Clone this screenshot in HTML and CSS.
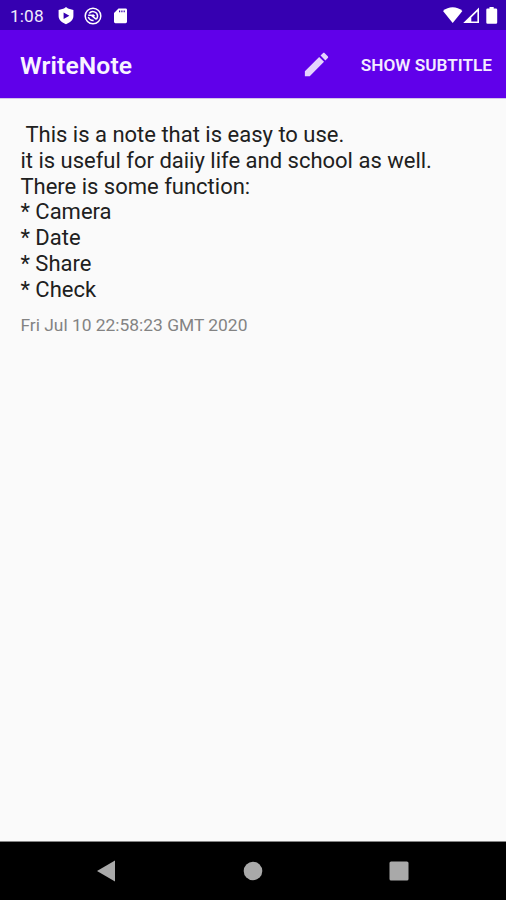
FILE: index.html
```html
<!DOCTYPE html>
<html lang="en">
<head>
<meta charset="utf-8">
<title>WriteNote</title>
<link rel="stylesheet" href="styles.css">
</head>
<body>
<div class="screen">
  <div class="status">
    <span class="clock">1:08</span>
    <svg class="shield" width="16" height="18" viewBox="0 0 16 18"><path fill="#fff" fill-rule="evenodd" d="M8 0 10 1.6 15.4 3V9C15.4 13 12 15.5 8 17.2 4 15.5.6 13 .6 9V3L6 1.6ZM5.6 5.5V12L11.4 8.7Z"/></svg>
    <svg class="sync" width="18" height="18" viewBox="0 0 18 18" fill="none" stroke="#fff"><circle cx="9" cy="9" r="7.8" stroke-width="1.5"/><path stroke-width="1.5" d="M5.2 6.4A4.7 4.7 0 0 1 13.6 9.2Q13.4 11 12.3 12.2M4.3 9.9C5 12.3 6.8 13.6 9.6 13.5M4.2 8.2H7.2L12 12.2M8.4 7.6 10.6 9.2"/></svg>
    <svg class="card" width="13" height="16" viewBox="0 0 13 16"><path fill="#fff" fill-rule="evenodd" d="M4.5.4H11.6Q13 .4 13 1.8V13.8Q13 15.2 11.6 15.2H1.4Q0 15.2 0 13.8V5ZM5 2.4V4.2H6.2V2.4ZM7.3 2.4V4.2H8.5V2.4ZM9.6 2.4V4.2H10.8V2.4Z"/></svg>
    <svg class="wifi" width="20" height="17" viewBox="0 0 20 17"><path fill="#fff" d="M0 4Q4.3.3 9.7.3T19.4 4L9.7 16Z"/></svg>
    <svg class="signal" width="17" height="17" viewBox="0 0 17 17"><path fill="#fff" fill-rule="evenodd" d="M16 .5V16H.2ZM14.4 4.5 8.3 10.6V14.4H14.4Z"/></svg>
    <svg class="battery" width="12" height="18" viewBox="0 0 12 18"><path fill="#fff" d="M3.5 0H7.7V1.5H9.9Q11.2 1.5 11.2 2.8V15.4Q11.2 16.7 9.9 16.7H1.6Q.3 16.7 .3 15.4V2.8Q.3 1.5 1.6 1.5H3.5Z"/></svg>
  </div>
  <header class="bar">
    <h1 class="title">WriteNote</h1>
    <svg class="pencil" width="31" height="31" viewBox="0 0 24 24"><path fill="#e5d3fd" d="M3 17.25V21h3.75L17.81 9.94l-3.75-3.75L3 17.25zM20.71 7.04c.39-.39.39-1.02 0-1.41l-2.34-2.34c-.39-.39-1.02-.39-1.41 0l-1.83 1.83 3.75 3.75 1.83-1.83z"/></svg>
    <span class="action">SHOW SUBTITLE</span>
  </header>
  <main class="content">
    <div class="note"><div> This is a note that is easy to use.</div><div>it is useful for daiiy life and school as well.</div><div>There is some function:</div><div>* Camera</div><div>* Date</div><div>* Share</div><div>* Check</div></div>
    <div class="date">Fri Jul 10 22:58:23 GMT 2020</div>
  </main>
  <nav class="nav">
    <svg width="20" height="22" viewBox="0 0 20 22"><path fill="#a9a9a9" d="M19 .6V21.4L1 11Z"/></svg>
    <svg width="20" height="20" viewBox="0 0 20 20"><circle cx="10" cy="10" r="9.3" fill="#a9a9a9"/></svg>
    <svg width="20" height="20" viewBox="0 0 20 20"><rect x=".5" y=".5" width="19" height="19" rx="1.6" fill="#a9a9a9"/></svg>
  </nav>
</div>
</body>
</html>
```
FILE: styles.css
```css
body {
  margin: 0;
  font-family: Roboto, "Liberation Sans", sans-serif;
}

.screen {
  display: flex;
  flex-direction: column;
  height: 900px;
  background: #fafafa;
  overflow: hidden;
}

.status {
  display: flex;
  align-items: center;
  flex: none;
  box-sizing: border-box;
  height: 30px;
  padding: 1px 8px 0 10px;
  background: #3600b1;
}

.clock {
  width: 48px;
  color: #f0ebfc;
  font-size: 17.3px;
  line-height: 20px;
  letter-spacing: 0.1px;
}

.sync {
  margin-left: 10px;
}

.card {
  margin-left: 12px;
}

.wifi {
  margin-left: auto;
}

.battery {
  margin-left: 6px;
}

.bar {
  display: flex;
  align-items: center;
  flex: none;
  box-sizing: border-box;
  height: 69px;
  padding: 1px 14px 0 20px;
  background: #6000ea;
  border-bottom: 1px solid #d3c4e8;
}

.title {
  margin: 0;
  padding-top: 2px;
  color: #f8f3ff;
  font-size: 24.7px;
  font-weight: 600;
  line-height: 30px;
  letter-spacing: 0.1px;
}

.pencil {
  margin-left: auto;
}

.action {
  margin-left: 29px;
  padding-top: 1px;
  color: #f3ebff;
  font-size: 17.2px;
  font-weight: 600;
  line-height: 22px;
  white-space: nowrap;
}

.content {
  flex: 1;
  padding: 23px 20px 0 20.4px;
}

.note {
  color: #202020;
  font-size: 22px;
  line-height: 25.8px;
  white-space: pre;
}

.date {
  margin-top: 11px;
  color: #838383;
  font-size: 17.4px;
  line-height: 22px;
  white-space: nowrap;
}

.nav {
  display: flex;
  align-items: center;
  justify-content: space-between;
  flex: none;
  box-sizing: border-box;
  height: 59px;
  padding: 0 97px 0 96px;
  background: #000;
  border-top: 1px solid #858585;
}
```
